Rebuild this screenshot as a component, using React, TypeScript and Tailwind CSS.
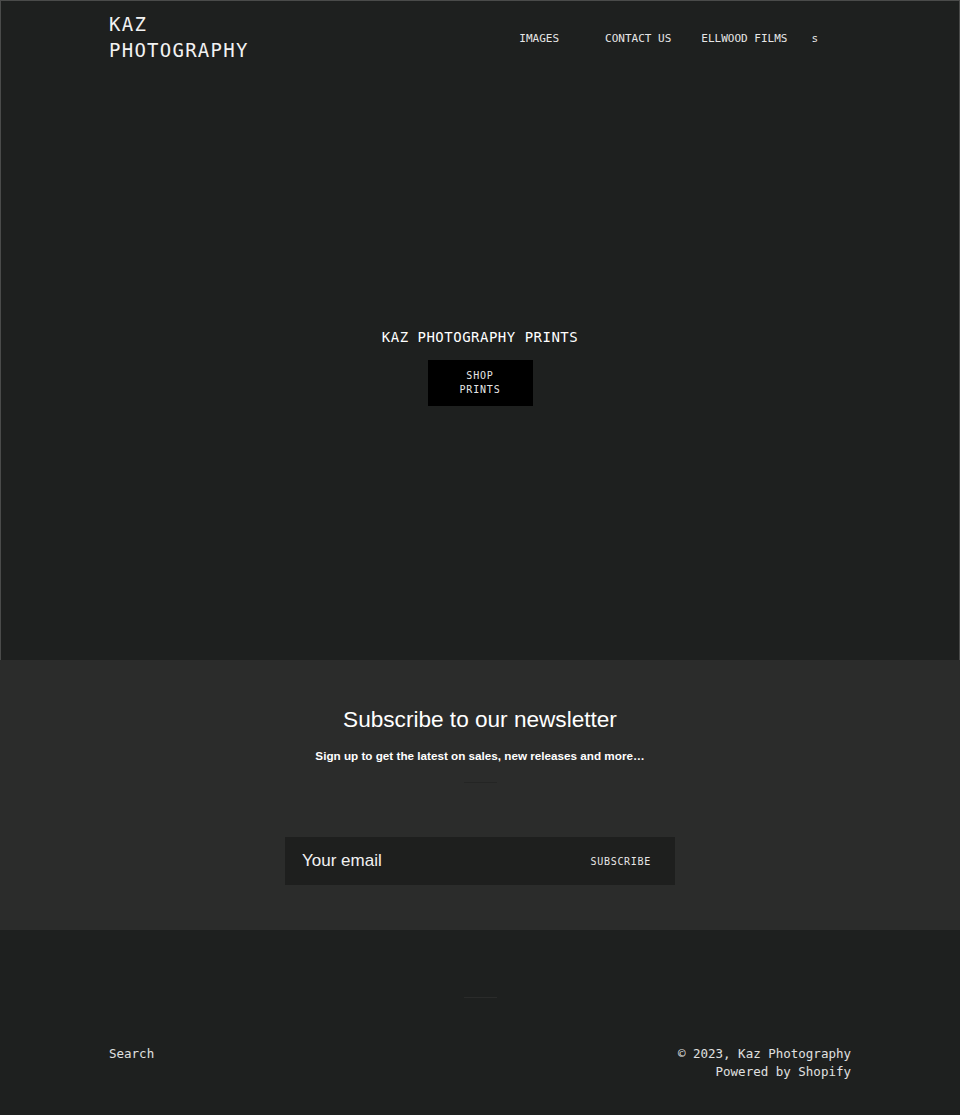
const mono = "font-['DejaVu_Sans_Mono','Liberation_Mono',monospace]";
const sans = "font-['Liberation_Sans',Arial,sans-serif]";

function Header() {
  return (
    <header className="mx-auto flex w-[742px] items-start justify-between pt-[10px]">
      <a className={`${mono} block text-[19px] leading-[26px] tracking-[1.25px] text-[#f2f2f2]`}>
        KAZ
        <br />
        PHOTOGRAPHY
      </a>
      <nav className={`${mono} mr-[33px] mt-[21px] flex items-center text-[11px] leading-[14px] text-[#e6e6e6]`}>
        <a className="mr-[46px] -ml-[1px]">IMAGES</a>
        <a className="mr-[30px]">CONTACT US</a>
        <a className="mr-[24px]">ELLWOOD FILMS</a>
        <a>s</a>
      </nav>
    </header>
  );
}

function Hero() {
  return (
    <section className="flex h-[660px] flex-col border border-b-0 border-[#4a4b4a] bg-[#1e201f]">
      <Header />
      <div className="flex flex-1 flex-col items-center justify-center pt-[10px]">
        <h2 className={`${mono} text-[14px] leading-[18px] tracking-[0.5px] text-white`}>
          KAZ PHOTOGRAPHY PRINTS
        </h2>
        <button
          className={`${mono} mt-[14px] flex h-[46px] w-[105px] flex-col items-center justify-center bg-black text-[10px] leading-[14px] tracking-[0.8px] text-[#e6e6e6]`}
        >
          <span>SHOP</span>
          <span>PRINTS</span>
        </button>
      </div>
    </section>
  );
}

function Newsletter() {
  return (
    <section className="flex h-[270px] flex-col items-center bg-[#2b2c2b] pt-[45px]">
      <h2 className={`${sans} text-[22.6px] leading-[30px] text-white`}>Subscribe to our newsletter</h2>
      <p className={`${sans} mt-[12px] text-[11.7px] font-bold leading-[18px] text-white`}>
        Sign up to get the latest on sales, new releases and more…
      </p>
      <div className="mt-[17px] h-px w-[33px] bg-[#242524]" />
      <form className="mt-[54px] flex h-[48px] w-[390px] items-center justify-between bg-[#1e1f1e] pl-[17px] pr-[24px]">
        <span className={`${sans} text-[17px] text-[#f2f2f2]`}>Your email</span>
        <span className={`${mono} text-[10px] tracking-[0.7px] text-[#e6e6e6]`}>SUBSCRIBE</span>
      </form>
    </section>
  );
}

function Footer() {
  return (
    <footer className="h-[185px] bg-[#1e201f] pt-[67px]">
      <div className="mx-auto h-px w-[33px] bg-[#2a2b2a]" />
      <div className={`${mono} mx-auto mt-[47px] flex w-[742px] items-start justify-between text-[12.5px] leading-[18px] text-[#e0e0e0]`}>
        <a>Search</a>
        <div className="text-right">
          <p>© 2023, Kaz Photography</p>
          <p>Powered by Shopify</p>
        </div>
      </div>
    </footer>
  );
}

export default function App() {
  return (
    <div className="min-h-[1115px] w-[960px] bg-[#1e201f]">
      <Hero />
      <Newsletter />
      <Footer />
    </div>
  );
}
